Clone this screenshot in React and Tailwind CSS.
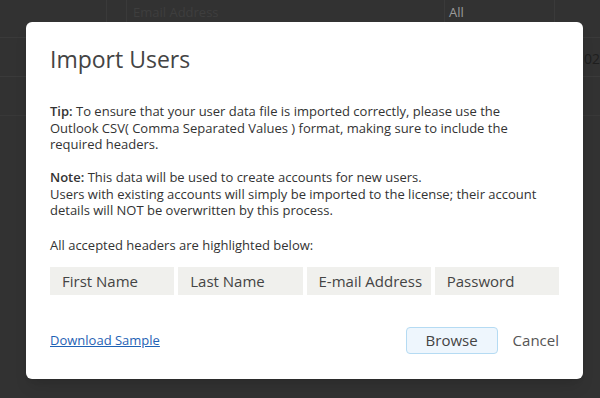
import React from "react";

const HEADERS = ["First Name", "Last Name", "E-mail Address", "Password"];

export default function App() {
  return (
    <div className="relative w-[600px] h-[398px] overflow-hidden bg-[#323232]" style={{ fontFamily: '"Open Sans", "Noto Sans", sans-serif' }}>
      {/* Dimmed table behind the dialog */}
      <div className="flex flex-col">
        <div className="flex h-[38px] border-b border-[#3a3a3a] text-[13px] text-[#9a9a9a]">
          <div className="w-[107px] border-r border-[#3a3a3a]" />
          <div className="w-[20px] border-r border-[#3a3a3a]" />
          <div className="w-[318px] border-r border-[#3a3a3a] pl-[6px] pt-[3px] text-[#3e3e3e]">Email Address</div>
          <div className="w-[110px] border-r border-[#3a3a3a] pl-[4px] pt-[3px]">All</div>
          <div className="flex-1" />
        </div>
        <div className="flex h-[39px] border-b border-[#3a3a3a] text-[14px] text-[#1e1e1e]">
          <div className="flex-1" />
          <div className="pt-[10px] w-[16px] overflow-hidden">02</div>
        </div>
        <div className="h-[39px] border-b border-[#383838]" />
      </div>

      {/* Dialog */}
      <div className="absolute left-[26px] top-[22px] w-[557px] h-[357px] rounded-[6px] bg-white px-6 pt-[22px] shadow-lg">
        <h1 className="text-[23px] leading-[31px] text-[#444] font-normal">Import Users</h1>

        <div className="mt-[28px] w-[490px] text-[13px] leading-[16.5px] text-[#333]">
          <p>
            <span className="font-semibold">Tip:</span> To ensure that your user data file is imported correctly, please use the Outlook CSV( Comma Separated Values ) format, making sure to include the required headers.
          </p>
          <p className="mt-[16.5px]">
            <span className="font-semibold">Note:</span> This data will be used to create accounts for new users.
            <br />
            Users with existing accounts will simply be imported to the license; their account details will NOT be overwritten by this process.
          </p>
          <p className="mt-[18px]">All accepted headers are highlighted below:</p>
        </div>

        <div className="mt-[14px] grid grid-cols-4 gap-1">
          {HEADERS.map((h) => (
            <div key={h} className="h-[28px] bg-[#f0f0ed] pl-3 text-[15px] leading-[28px] text-[#444]">
              {h}
            </div>
          ))}
        </div>

        <div className="mt-[32px] flex items-center">
          <a href="#" className="text-[13px] text-[#1f62b5] underline">Download Sample</a>
          <div className="ml-auto flex items-center gap-[15px]">
            <button className="h-[27px] w-[92px] rounded-[4px] border border-[#b5dbf3] bg-[#eef6fd] text-[15px] text-[#444]">Browse</button>
            <button className="text-[15px] text-[#555]">Cancel</button>
          </div>
        </div>
      </div>
    </div>
  );
}
